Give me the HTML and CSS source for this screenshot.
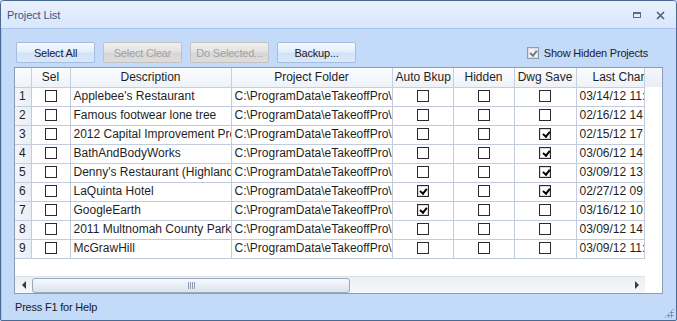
FILE: index.html
```html
<!DOCTYPE html>
<html lang="en">
<head>
    <meta charset="UTF-8">
    <title>Project List</title>
    <link rel="stylesheet" href="styles.css">
</head>
<body>
    <div class="window">
        <div class="titlebar">
            <span class="title">Project List</span>
            <div class="title-buttons">
                <span class="btn-restore"></span>
                <svg class="btn-close" width="9" height="9" viewBox="0 0 9 9">
                    <path d="M1 1 L8 8 M8 1 L1 8" stroke="#4a5f7e" stroke-width="1.6" fill="none"/>
                </svg>
            </div>
        </div>

        <div class="client">
            <div class="toolbar">
                <button class="btn">Select All</button>
                <button class="btn" disabled>Select Clear</button>
                <button class="btn" disabled>Do Selected...</button>
                <button class="btn">Backup...</button>
                <label class="show-hidden">
                    <span class="chk chk-light checked"></span>
                    Show Hidden Projects
                </label>
            </div>

            <div class="grid">
                <div class="grid-view">
                    <table class="data">
                        <colgroup>
                            <col class="c-num">
                            <col class="c-sel">
                            <col class="c-desc">
                            <col class="c-folder">
                            <col class="c-auto">
                            <col class="c-hidden">
                            <col class="c-dwg">
                            <col class="c-last">
                        </colgroup>
                        <thead>
                            <tr>
                                <th></th>
                                <th>Sel</th>
                                <th>Description</th>
                                <th>Project Folder</th>
                                <th>Auto Bkup</th>
                                <th>Hidden</th>
                                <th>Dwg Save</th>
                                <th class="th-last">Last Change</th>
                            </tr>
                        </thead>
                        <tbody id="rows"></tbody>
                    </table>
                    <div class="grid-blank"></div>
                </div>
                <div class="hscroll">
                    <span class="arrow arrow-left"></span>
                    <div class="track">
                        <div class="thumb"><span class="grip"></span></div>
                    </div>
                    <span class="arrow arrow-right"></span>
                </div>
            </div>

            <div class="status">Press F1 for Help</div>
        </div>
        <div class="grip-corner"></div>
    </div>

    <script>
        // name, auto backup, hidden, dwg save, last change
        const projects = [
            ["Applebee's Restaurant", false, false, false, "03/14/12 11:02"],
            ["Famous footwear lone tree", false, false, false, "02/16/12 14:20"],
            ["2012 Capital Improvement Projects", false, false, true, "02/15/12 17:45"],
            ["BathAndBodyWorks", false, false, true, "03/06/12 14:12"],
            ["Denny's Restaurant (Highlands Ranch)", false, false, true, "03/09/12 13:30"],
            ["LaQuinta Hotel", true, false, true, "02/27/12 09:15"],
            ["GoogleEarth", true, false, false, "03/16/12 10:05"],
            ["2011 Multnomah County Parks", false, false, false, "03/09/12 14:40"],
            ["McGrawHill", false, false, false, "03/09/12 11:22"]
        ];

        const folder = 'C:\\ProgramData\\eTakeoffPro\\Projects';

        function box(checked) {
            return '<span class="chk' + (checked ? ' checked' : '') + '"></span>';
        }

        const tbody = document.getElementById('rows');
        projects.forEach((p, i) => {
            const tr = document.createElement('tr');
            tr.innerHTML =
                '<td class="num">' + (i + 1) + '</td>' +
                '<td class="ctr">' + box(false) + '</td>' +
                '<td>' + p[0] + '</td>' +
                '<td>' + folder + '\\' + p[0] + '</td>' +
                '<td class="ctr">' + box(p[1]) + '</td>' +
                '<td class="ctr">' + box(p[2]) + '</td>' +
                '<td class="ctr">' + box(p[3]) + '</td>' +
                '<td>' + p[4] + '</td>';
            tbody.appendChild(tr);
        });
    </script>
</body>
</html>
```

FILE: styles.css
```css
* {
    box-sizing: border-box;
}
body {
    margin: 0;
    font-family: "Liberation Sans", Arial, sans-serif;
    background-color: #c3daf9;
}
.window {
    position: relative;
    width: 677px;
    height: 321px;
    border: 1px solid #4a6a94;
    border-radius: 4px 4px 2px 2px;
    background-color: #c3daf9;
    display: flex;
    flex-direction: column;
    overflow: hidden;
}
.titlebar {
    height: 28px;
    display: flex;
    align-items: center;
    padding: 1px 6px 0;
    background: linear-gradient(#e9f1fd, #d8e7fb);
    border-bottom: 1px solid #aac6ec;
}
.title {
    font-size: 11px;
    color: #35578a;
    letter-spacing: -0.1px;
}
.title-buttons {
    margin-left: auto;
    display: flex;
    align-items: center;
    gap: 15px;
    padding-right: 5px;
}
.btn-restore {
    width: 8px;
    height: 6px;
    border: 1px solid #5b6f8c;
    border-top-width: 2px;
}
.client {
    flex: 1;
    display: flex;
    flex-direction: column;
    padding: 13px 14px 0 12px;
    border-left: 2px solid #a9c4e8;
    margin-left: -1px;
}
.toolbar {
    display: flex;
    align-items: center;
    gap: 8px;
    padding-left: 2px;
    height: 21px;
}
.btn {
    width: 79px;
    height: 21px;
    padding: 0;
    font-family: "Liberation Sans", Arial, sans-serif;
    font-size: 11px;
    letter-spacing: -0.2px;
    color: #1b1b1b;
    background: linear-gradient(#f7faff 0%, #e4eefc 45%, #d2e2f8 55%, #dbe8fb 100%);
    border: 1px solid #a4bde0;
    border-radius: 2px;
}
.btn:disabled {
    color: #a2a2a2;
    background: linear-gradient(#f1f1f1 0%, #e3e3e3 45%, #d6d6d6 55%, #dddddd 100%);
    border-color: #c2c2c2;
}
.show-hidden {
    margin-left: auto;
    margin-right: 14px;
    display: flex;
    align-items: center;
    gap: 5px;
    font-size: 11px;
    letter-spacing: -0.2px;
    color: #1b1b1b;
}
.chk {
    display: inline-block;
    width: 12px;
    height: 12px;
    border: 1px solid #2b2b2b;
    background-color: #ffffff;
    vertical-align: middle;
    position: relative;
}
.chk.checked {
    box-shadow: inset 0 0 0 1px #dcdcdc;
}
.chk.checked::after {
    content: "";
    position: absolute;
    left: 3.5px;
    top: 1.5px;
    width: 2.5px;
    height: 5px;
    border: solid #000;
    border-width: 0 2px 2px 0;
    transform: rotate(40deg);
}
.chk-light {
    border-color: #8e9bb0;
    background: linear-gradient(#e7ebf2, #ffffff);
}
.chk-light.checked::after {
    border-color: #6b7a92;
}
.grid {
    margin-top: 4px;
    width: 649px;
    height: 227px;
    border: 1px solid #8a9cb8;
    background-color: #ffffff;
    display: flex;
    flex-direction: column;
}
.grid-view {
    flex: 1;
    display: flex;
    overflow: hidden;
    background-color: #ffffff;
}
.data {
    border-collapse: collapse;
    table-layout: fixed;
    width: 629px;
    font-size: 12px;
    color: #1f1f1f;
    align-self: flex-start;
}
.c-num { width: 16px; }
.c-sel { width: 39px; }
.c-desc { width: 161px; }
.c-folder { width: 161px; }
.c-auto { width: 61px; }
.c-hidden { width: 61px; }
.c-dwg { width: 62px; }
.c-last { width: 68px; }
.data th,
.data td {
    height: 19px;
    padding: 0 3px;
    border: 1px solid #c2ccdc;
    white-space: nowrap;
    overflow: hidden;
    text-overflow: clip;
    line-height: 17px;
}
.data tr:first-child th {
    border-top: none;
}
.data th:first-child,
.data td:first-child {
    border-left: none;
}
.data th {
    font-weight: normal;
    background: linear-gradient(#fbfcfe, #eef2f8);
    border-color: #c5cfde;
    text-align: center;
}
.data th.th-last {
    text-align: left;
    padding-left: 16px;
}
.data td.num {
    background: linear-gradient(90deg, #f3f6fb, #e9eef6);
    padding-left: 4px;
}
.data td.ctr {
    text-align: center;
    padding: 0;
}
.data td.ctr .chk {
    width: 12px;
    height: 12px;
    margin-top: -2px;
}
.grid-blank {
    flex: 1;
    height: 19px;
    background: linear-gradient(#f4f6fa, #e9eef5);
}
.hscroll {
    height: 17px;
    display: flex;
    align-items: center;
    background: linear-gradient(#eceff3, #f6f7f9);
    border-top: 1px solid #e0e4ea;
    margin-right: 17px;
}
.arrow {
    width: 17px;
    display: flex;
    justify-content: center;
}
.arrow::before {
    content: "";
    border: 4px solid transparent;
}
.arrow-left::before {
    border-right: 4px solid #3c3c3c;
    border-left: none;
}
.arrow-right::before {
    border-left: 4px solid #3c3c3c;
    border-right: none;
}
.track {
    flex: 1;
    height: 15px;
}
.thumb {
    width: 318px;
    height: 15px;
    border: 1px solid #9aa9bf;
    border-radius: 3px;
    background: linear-gradient(#f7f9fc, #dbe3ee);
    display: flex;
    align-items: center;
    justify-content: center;
}
.grip {
    width: 7px;
    height: 7px;
    background: repeating-linear-gradient(90deg, #8f9db2 0 1px, transparent 1px 2px);
}
.status {
    height: 26px;
    display: flex;
    align-items: center;
    padding-left: 1px;
    font-size: 11px;
    letter-spacing: -0.2px;
    color: #1b1b1b;
}
.grip-corner {
    position: absolute;
    right: 2px;
    bottom: 2px;
    width: 10px;
    height: 10px;
    background:
        radial-gradient(circle, #6d7e96 0.9px, transparent 1.2px) 0 0 / 3px 3px;
    clip-path: polygon(100% 0, 100% 100%, 0 100%);
}
```
